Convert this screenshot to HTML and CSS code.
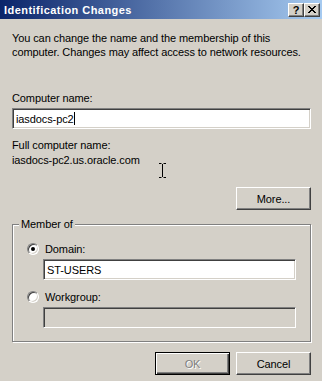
FILE: index.html
```html
<!DOCTYPE html>
<html lang="en">
<head>
  <meta charset="UTF-8">
  <title>Identification Changes</title>
  <link rel="stylesheet" href="styles.css">
</head>
<body>

<div class="window">
  <div class="titlebar">
    <span class="title">Identification Changes</span>
    <div class="title-buttons">
      <span class="tbtn help">?</span>
      <span class="tbtn close">
        <svg width="8" height="7" viewBox="0 0 8 7"><path d="M0 0h2v1h1v1h2v-1h1v-1h2v1h-1v1h-1v1h-1v1h1v1h1v1h1v1h-2v-1h-1v-1h-2v1h-1v1h-2v-1h1v-1h1v-1h1v-1h-1v-1h-1v-1h-1z" fill="#000"/></svg>
      </span>
    </div>
  </div>

  <div class="content">
    <p class="intro">You can change the name and the membership of this<br>computer. Changes may affect access to network resources.</p>

    <div class="label">Computer name:</div>
    <div class="edit"><span class="edit-text">iasdocs-pc2</span><span class="caret"></span></div>

    <div class="fullname">
      <div>Full computer name:</div>
      <div>iasdocs-pc2.us.oracle.com</div>
    </div>

    <div class="more-row">
      <span class="btn">More...</span>
    </div>

    <div class="group">
      <span class="group-title">Member of</span>
      <div class="radio-row first">
        <span class="radio checked"></span>
        <span>Domain:</span>
      </div>
      <div class="edit sub">ST-USERS</div>
      <div class="radio-row">
        <span class="radio"></span>
        <span>Workgroup:</span>
      </div>
      <div class="edit sub disabled"></div>
    </div>

    <div class="footer">
      <span class="btn default disabled-text">OK</span>
      <span class="btn">Cancel</span>
    </div>
  </div>

  <svg class="ibeam" width="7" height="15" viewBox="0 0 7 15">
    <path d="M0 0.5h2.5M4.5 0.5h2.5M3.5 1v13M0 14.5h2.5M4.5 14.5h2.5" stroke="#000" stroke-width="1" fill="none"/>
  </svg>
</div>

</body>
</html>
```

FILE: styles.css
```css
body {
  margin: 0;
  background: #d4d0c8;
  font-family: 'Liberation Sans', Arial, sans-serif;
  font-size: 11px;
  letter-spacing: -0.1px;
  color: #000;
}
.window {
  position: relative;
  width: 322px;
  height: 381px;
  background: #d4d0c8;
  overflow: hidden;
}
.titlebar {
  height: 19px;
  display: flex;
  align-items: center;
  justify-content: space-between;
  background: linear-gradient(to right, #0a246a, #a6caf0);
  padding-left: 4px;
  padding-right: 2px;
}
.title {
  color: #fff;
  font-weight: bold;
  font-size: 11px;
  letter-spacing: 0.45px;
}
.title-buttons {
  display: flex;
}
.tbtn {
  width: 16px;
  height: 14px;
  box-sizing: border-box;
  background: #d4d0c8;
  border: 1px solid;
  border-color: #fff #404040 #404040 #fff;
  box-shadow: inset -1px -1px #808080;
  display: flex;
  align-items: center;
  justify-content: center;
  font-weight: bold;
  font-size: 11px;
  line-height: 12px;
}
.close svg {
  display: block;
  margin-left: -1px;
}
.content {
  padding: 0 11px 0 12px;
}
.intro {
  margin: 12px 0 0;
  line-height: 14px;
}
.label {
  margin-top: 32px;
  line-height: 14px;
}
.edit {
  height: 21px;
  box-sizing: border-box;
  margin-top: 3px;
  background: #fff;
  border: 1px solid;
  border-color: #808080 #fff #fff #808080;
  box-shadow: inset 1px 1px #404040, inset -1px -1px #d4d0c8;
  padding: 0 3px;
  display: flex;
  align-items: center;
  line-height: 14px;
}
.caret {
  display: inline-block;
  width: 1px;
  height: 13px;
  background: #000;
}
.edit.sub {
  margin: 3px 14px 0 30px;
}
.edit.disabled {
  background: #d4d0c8;
}
.fullname {
  margin-top: 9px;
  line-height: 15px;
}
.more-row {
  display: flex;
  justify-content: flex-end;
  margin-top: 19px;
}
.btn {
  width: 75px;
  height: 23px;
  box-sizing: border-box;
  background: #d4d0c8;
  border: 1px solid;
  border-color: #fff #404040 #404040 #fff;
  box-shadow: inset -1px -1px #808080;
  display: flex;
  align-items: center;
  justify-content: center;
}
.btn.default {
  border: 1px solid #000;
  box-shadow: inset 1px 1px #fff, inset -1px -1px #404040, inset -2px -2px #808080;
}
.disabled-text {
  color: #808080;
  text-shadow: 1px 1px #fff;
}
.group {
  margin-top: 14px;
  border: 1px solid #808080;
  box-shadow: inset 1px 1px #fff, 1px 1px #fff;
  padding-bottom: 13px;
}
.group-title {
  display: inline-block;
  margin: -8px 0 0 6px;
  padding: 0 2px;
  background: #d4d0c8;
  line-height: 14px;
  vertical-align: top;
}
.radio-row {
  display: flex;
  align-items: center;
  gap: 6px;
  height: 14px;
  margin: 10px 0 0 14px;
}
.radio-row.first {
  margin-top: 5px;
}
.radio {
  width: 12px;
  height: 12px;
  box-sizing: border-box;
  border-radius: 50%;
  background: #fff;
  border: 1px solid;
  border-color: #808080 #fff #fff #808080;
  box-shadow: inset 1px 1px #404040, inset -1px -1px #d4d0c8;
  display: flex;
  align-items: center;
  justify-content: center;
}
.radio.checked::after {
  content: '';
  width: 4px;
  height: 4px;
  border-radius: 50%;
  background: #000;
}
.footer {
  display: flex;
  justify-content: flex-end;
  gap: 6px;
  margin-top: 10px;
}
.ibeam {
  position: absolute;
  left: 159px;
  top: 163px;
}
```
